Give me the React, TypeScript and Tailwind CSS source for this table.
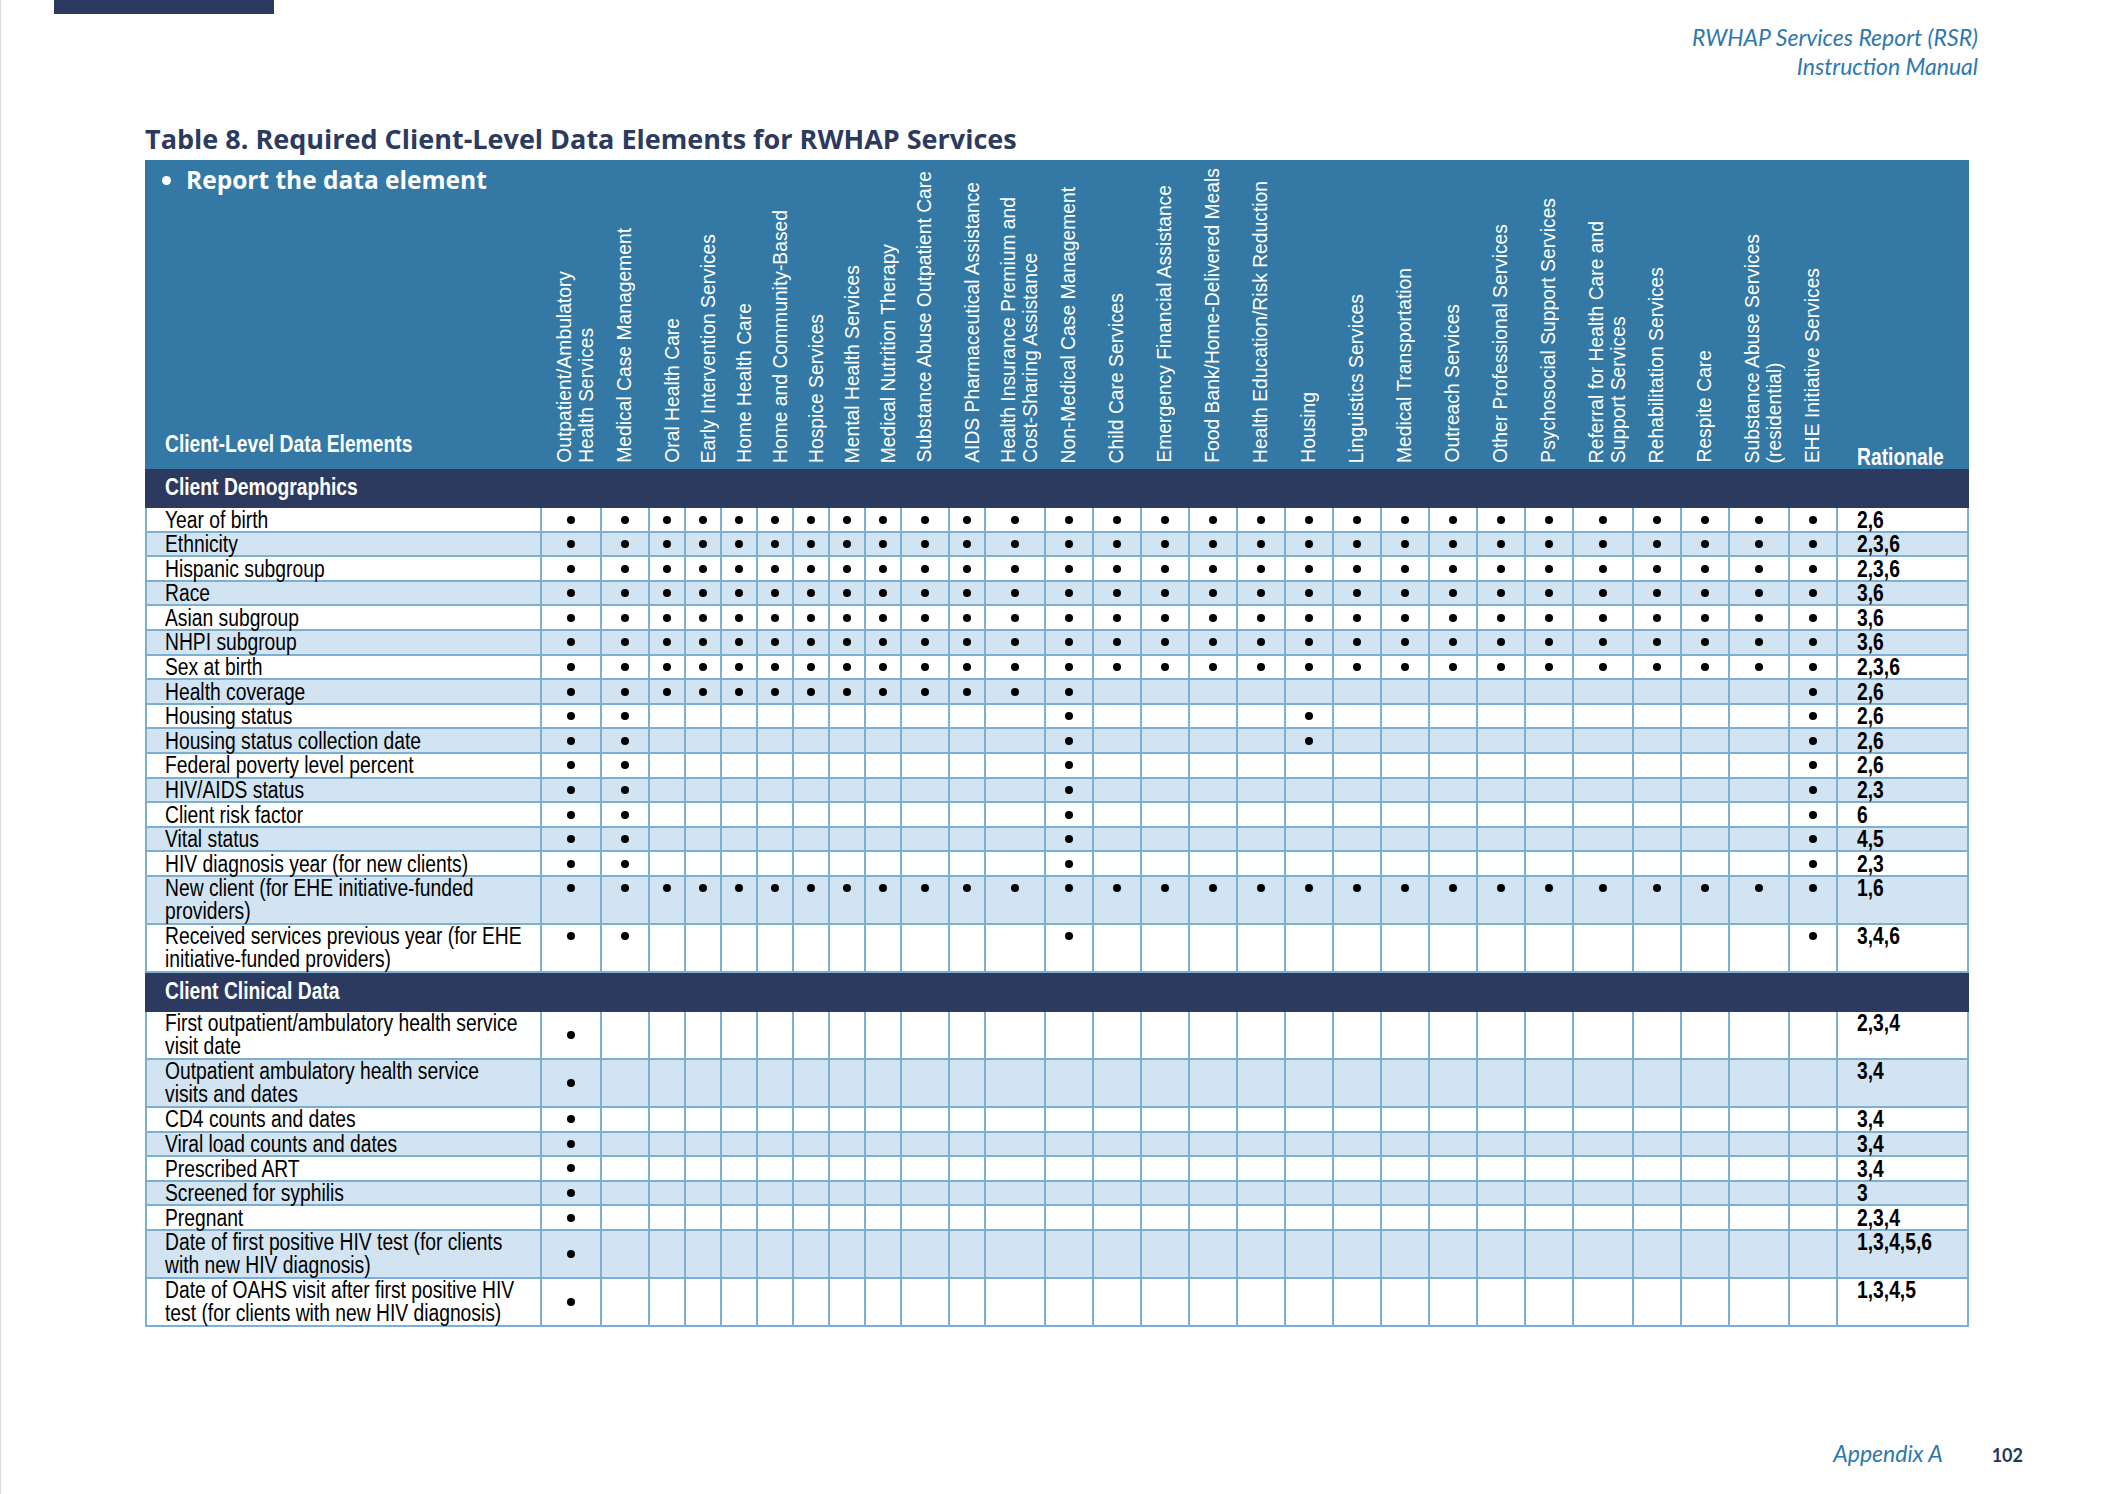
import React from 'react';

type Service = { w: 36 | 48 | 60; label: string[] };

const services: Service[] = [
  { w: 60, label: ['Outpatient/Ambulatory', 'Health Services'] },
  { w: 48, label: ['Medical Case Management'] },
  { w: 36, label: ['Oral Health Care'] },
  { w: 36, label: ['Early Intervention Services'] },
  { w: 36, label: ['Home Health Care'] },
  { w: 36, label: ['Home and Community-Based'] },
  { w: 36, label: ['Hospice Services'] },
  { w: 36, label: ['Mental Health Services'] },
  { w: 36, label: ['Medical Nutrition Therapy'] },
  { w: 48, label: ['Substance Abuse Outpatient Care'] },
  { w: 36, label: ['AIDS Pharmaceutical Assistance'] },
  { w: 60, label: ['Health Insurance Premium and', 'Cost-Sharing Assistance'] },
  { w: 48, label: ['Non-Medical Case Management'] },
  { w: 48, label: ['Child Care Services'] },
  { w: 48, label: ['Emergency Financial Assistance'] },
  { w: 48, label: ['Food Bank/Home-Delivered Meals'] },
  { w: 48, label: ['Health Education/Risk Reduction'] },
  { w: 48, label: ['Housing'] },
  { w: 48, label: ['Linguistics Services'] },
  { w: 48, label: ['Medical Transportation'] },
  { w: 48, label: ['Outreach Services'] },
  { w: 48, label: ['Other Professional Services'] },
  { w: 48, label: ['Psychosocial Support Services'] },
  { w: 60, label: ['Referral for Health Care and', 'Support Services'] },
  { w: 48, label: ['Rehabilitation Services'] },
  { w: 48, label: ['Respite Care'] },
  { w: 60, label: ['Substance Abuse Services', '(residential)'] },
  { w: 48, label: ['EHE Initiative Services'] },
];

const colW: Record<number, string> = {
  36: 'w-[36px]',
  48: 'w-[48px]',
  60: 'w-[60px]',
};

type DataRow = {
  label: string[];
  dots: 'all' | number[];
  rationale: string;
  tall?: boolean;
};

const core = [1, 2, 13, 28];
const withHousing = [1, 2, 13, 18, 28];

const demographics: DataRow[] = [
  { label: ['Year of birth'], dots: 'all', rationale: '2,6' },
  { label: ['Ethnicity'], dots: 'all', rationale: '2,3,6' },
  { label: ['Hispanic subgroup'], dots: 'all', rationale: '2,3,6' },
  { label: ['Race'], dots: 'all', rationale: '3,6' },
  { label: ['Asian subgroup'], dots: 'all', rationale: '3,6' },
  { label: ['NHPI subgroup'], dots: 'all', rationale: '3,6' },
  { label: ['Sex at birth'], dots: 'all', rationale: '2,3,6' },
  { label: ['Health coverage'], dots: [1, 2, 3, 4, 5, 6, 7, 8, 9, 10, 11, 12, 13, 28], rationale: '2,6' },
  { label: ['Housing status'], dots: withHousing, rationale: '2,6' },
  { label: ['Housing status collection date'], dots: withHousing, rationale: '2,6' },
  { label: ['Federal poverty level percent'], dots: core, rationale: '2,6' },
  { label: ['HIV/AIDS status'], dots: core, rationale: '2,3' },
  { label: ['Client risk factor'], dots: core, rationale: '6' },
  { label: ['Vital status'], dots: core, rationale: '4,5' },
  { label: ['HIV diagnosis year (for new clients)'], dots: core, rationale: '2,3' },
  { label: ['New client (for EHE initiative-funded', 'providers)'], dots: 'all', rationale: '1,6', tall: true },
  {
    label: ['Received services previous year (for EHE', 'initiative-funded providers)'],
    dots: core,
    rationale: '3,4,6',
    tall: true,
  },
];

const clinical: DataRow[] = [
  { label: ['First outpatient/ambulatory health service', 'visit date'], dots: [1], rationale: '2,3,4', tall: true },
  { label: ['Outpatient ambulatory health service', 'visits and dates'], dots: [1], rationale: '3,4', tall: true },
  { label: ['CD4 counts and dates'], dots: [1], rationale: '3,4' },
  { label: ['Viral load counts and dates'], dots: [1], rationale: '3,4' },
  { label: ['Prescribed ART'], dots: [1], rationale: '3,4' },
  { label: ['Screened for syphilis'], dots: [1], rationale: '3' },
  { label: ['Pregnant'], dots: [1], rationale: '2,3,4' },
  {
    label: ['Date of first positive HIV test (for clients', 'with new HIV diagnosis)'],
    dots: [1],
    rationale: '1,3,4,5,6',
    tall: true,
  },
  {
    label: ['Date of OAHS visit after first positive HIV', 'test (for clients with new HIV diagnosis)'],
    dots: [1],
    rationale: '1,3,4,5',
    tall: true,
  },
];

// Arial Narrow is not installed, so squeeze Liberation Sans horizontally instead
const Narrow: React.FC<{ children: React.ReactNode }> = ({ children }) => (
  <span className="inline-block origin-left scale-x-[0.82] whitespace-nowrap">{children}</span>
);

const TableRow: React.FC<{ row: DataRow; index: number; centerDots?: boolean }> = ({ row, index, centerDots }) => {
  const bg = index % 2 === 0 ? 'bg-white' : 'bg-[#d2e4f1]';
  const height = row.tall ? 'h-[48px]' : 'h-[24.6px]';
  return (
    <div className={`flex ${height} ${bg} border-l-2 border-b-2 border-[#7bafd4]`}>
      <div className="w-[395px] shrink-0 border-r-2 border-[#7bafd4] pl-[18px] pt-[0.5px]">
        {row.label.map((line) => (
          <div key={line}>
            <Narrow>{line}</Narrow>
          </div>
        ))}
      </div>
      {services.map((s, i) => {
        const on = row.dots === 'all' || row.dots.includes(i + 1);
        return (
          <div
            key={i}
            className={`${colW[s.w]} shrink-0 border-r-2 border-[#7bafd4] flex justify-center ${
              centerDots ? 'items-center' : 'items-start pt-[7.5px]'
            }`}
          >
            {on && <span className="block w-[7.5px] h-[8px] rounded-full bg-black" />}
          </div>
        );
      })}
      <div className="w-[131px] shrink-0 border-r-2 border-[#7bafd4] pl-[19px] pt-[0.5px] font-bold">
        <Narrow>{row.rationale}</Narrow>
      </div>
    </div>
  );
};

const SectionBand: React.FC<{ title: string }> = ({ title }) => (
  <div className="h-[39px] bg-[#2c3a60] pl-[20px] pt-[7px] font-bold text-white">
    <Narrow>{title}</Narrow>
  </div>
);

export default function App() {
  return (
    <div className="w-[2113px] h-[1494px] bg-white border-l border-[#dadada] overflow-hidden">
      <div className="ml-[53px] w-[220px] h-[13.5px] bg-[#2c3a60]" />

      <div className="mt-[9px] pr-[135px] text-right italic text-[#2f78ad] font-['Lato',sans-serif] text-[23px] leading-[29px]">
        <div>RWHAP Services Report (RSR)</div>
        <div>Instruction Manual</div>
      </div>

      <h1 className="ml-[144px] mt-[42px] text-[#2c3a60] font-bold font-['Open_Sans',sans-serif] text-[27px] leading-[31px]">
        Table 8. Required Client-Level Data Elements for RWHAP Services
      </h1>

      <div className="ml-[144px] mt-[6.5px] w-[1824px] text-black font-['Liberation_Sans',Arial,sans-serif] text-[23.5px] leading-[22.3px]">
        {/* header */}
        <div className="flex h-[309px] bg-[#3479a5]">
          <div className="w-[397px] shrink-0 flex flex-col justify-between pb-[14px]">
            <div className="flex items-center pl-[17px] pt-[4px] text-white font-bold font-['Open_Sans',sans-serif] text-[24.5px] leading-[32px]">
              <span className="block w-[9px] h-[9px] rounded-full bg-white mr-[15px]" />
              Report the data element
            </div>
            <div className="pl-[20px] font-bold text-white">
              <Narrow>Client-Level Data Elements</Narrow>
            </div>
          </div>
          {services.map((s, i) => (
            <div key={i} className={`${colW[s.w]} shrink-0 flex items-end pl-[12px] pb-[6px]`}>
              <div className="[writing-mode:vertical-rl] rotate-180 whitespace-nowrap text-white text-[19.3px] leading-[22px]">
                {s.label.map((line) => (
                  <div key={line}>{line}</div>
                ))}
              </div>
            </div>
          ))}
          <div className="w-[131px] shrink-0 flex items-end pl-[19px] pb-[1px] font-bold text-white">
            <Narrow>Rationale</Narrow>
          </div>
        </div>

        <SectionBand title="Client Demographics" />
        {demographics.map((row, i) => (
          <TableRow key={row.label[0]} row={row} index={i} />
        ))}

        <SectionBand title="Client Clinical Data" />
        {clinical.map((row, i) => (
          <TableRow key={row.label[0]} row={row} index={i} centerDots />
        ))}
      </div>

      <div className="mt-[112px] flex justify-end items-baseline pr-[90px]">
        <span className="italic text-[#2f78ad] font-['Lato',sans-serif] text-[23px] leading-[29px]">Appendix A</span>
        <span className="ml-[49px] font-bold text-[#26374f] font-['Lato',sans-serif] text-[18px] leading-[29px]">102</span>
      </div>
    </div>
  );
}
